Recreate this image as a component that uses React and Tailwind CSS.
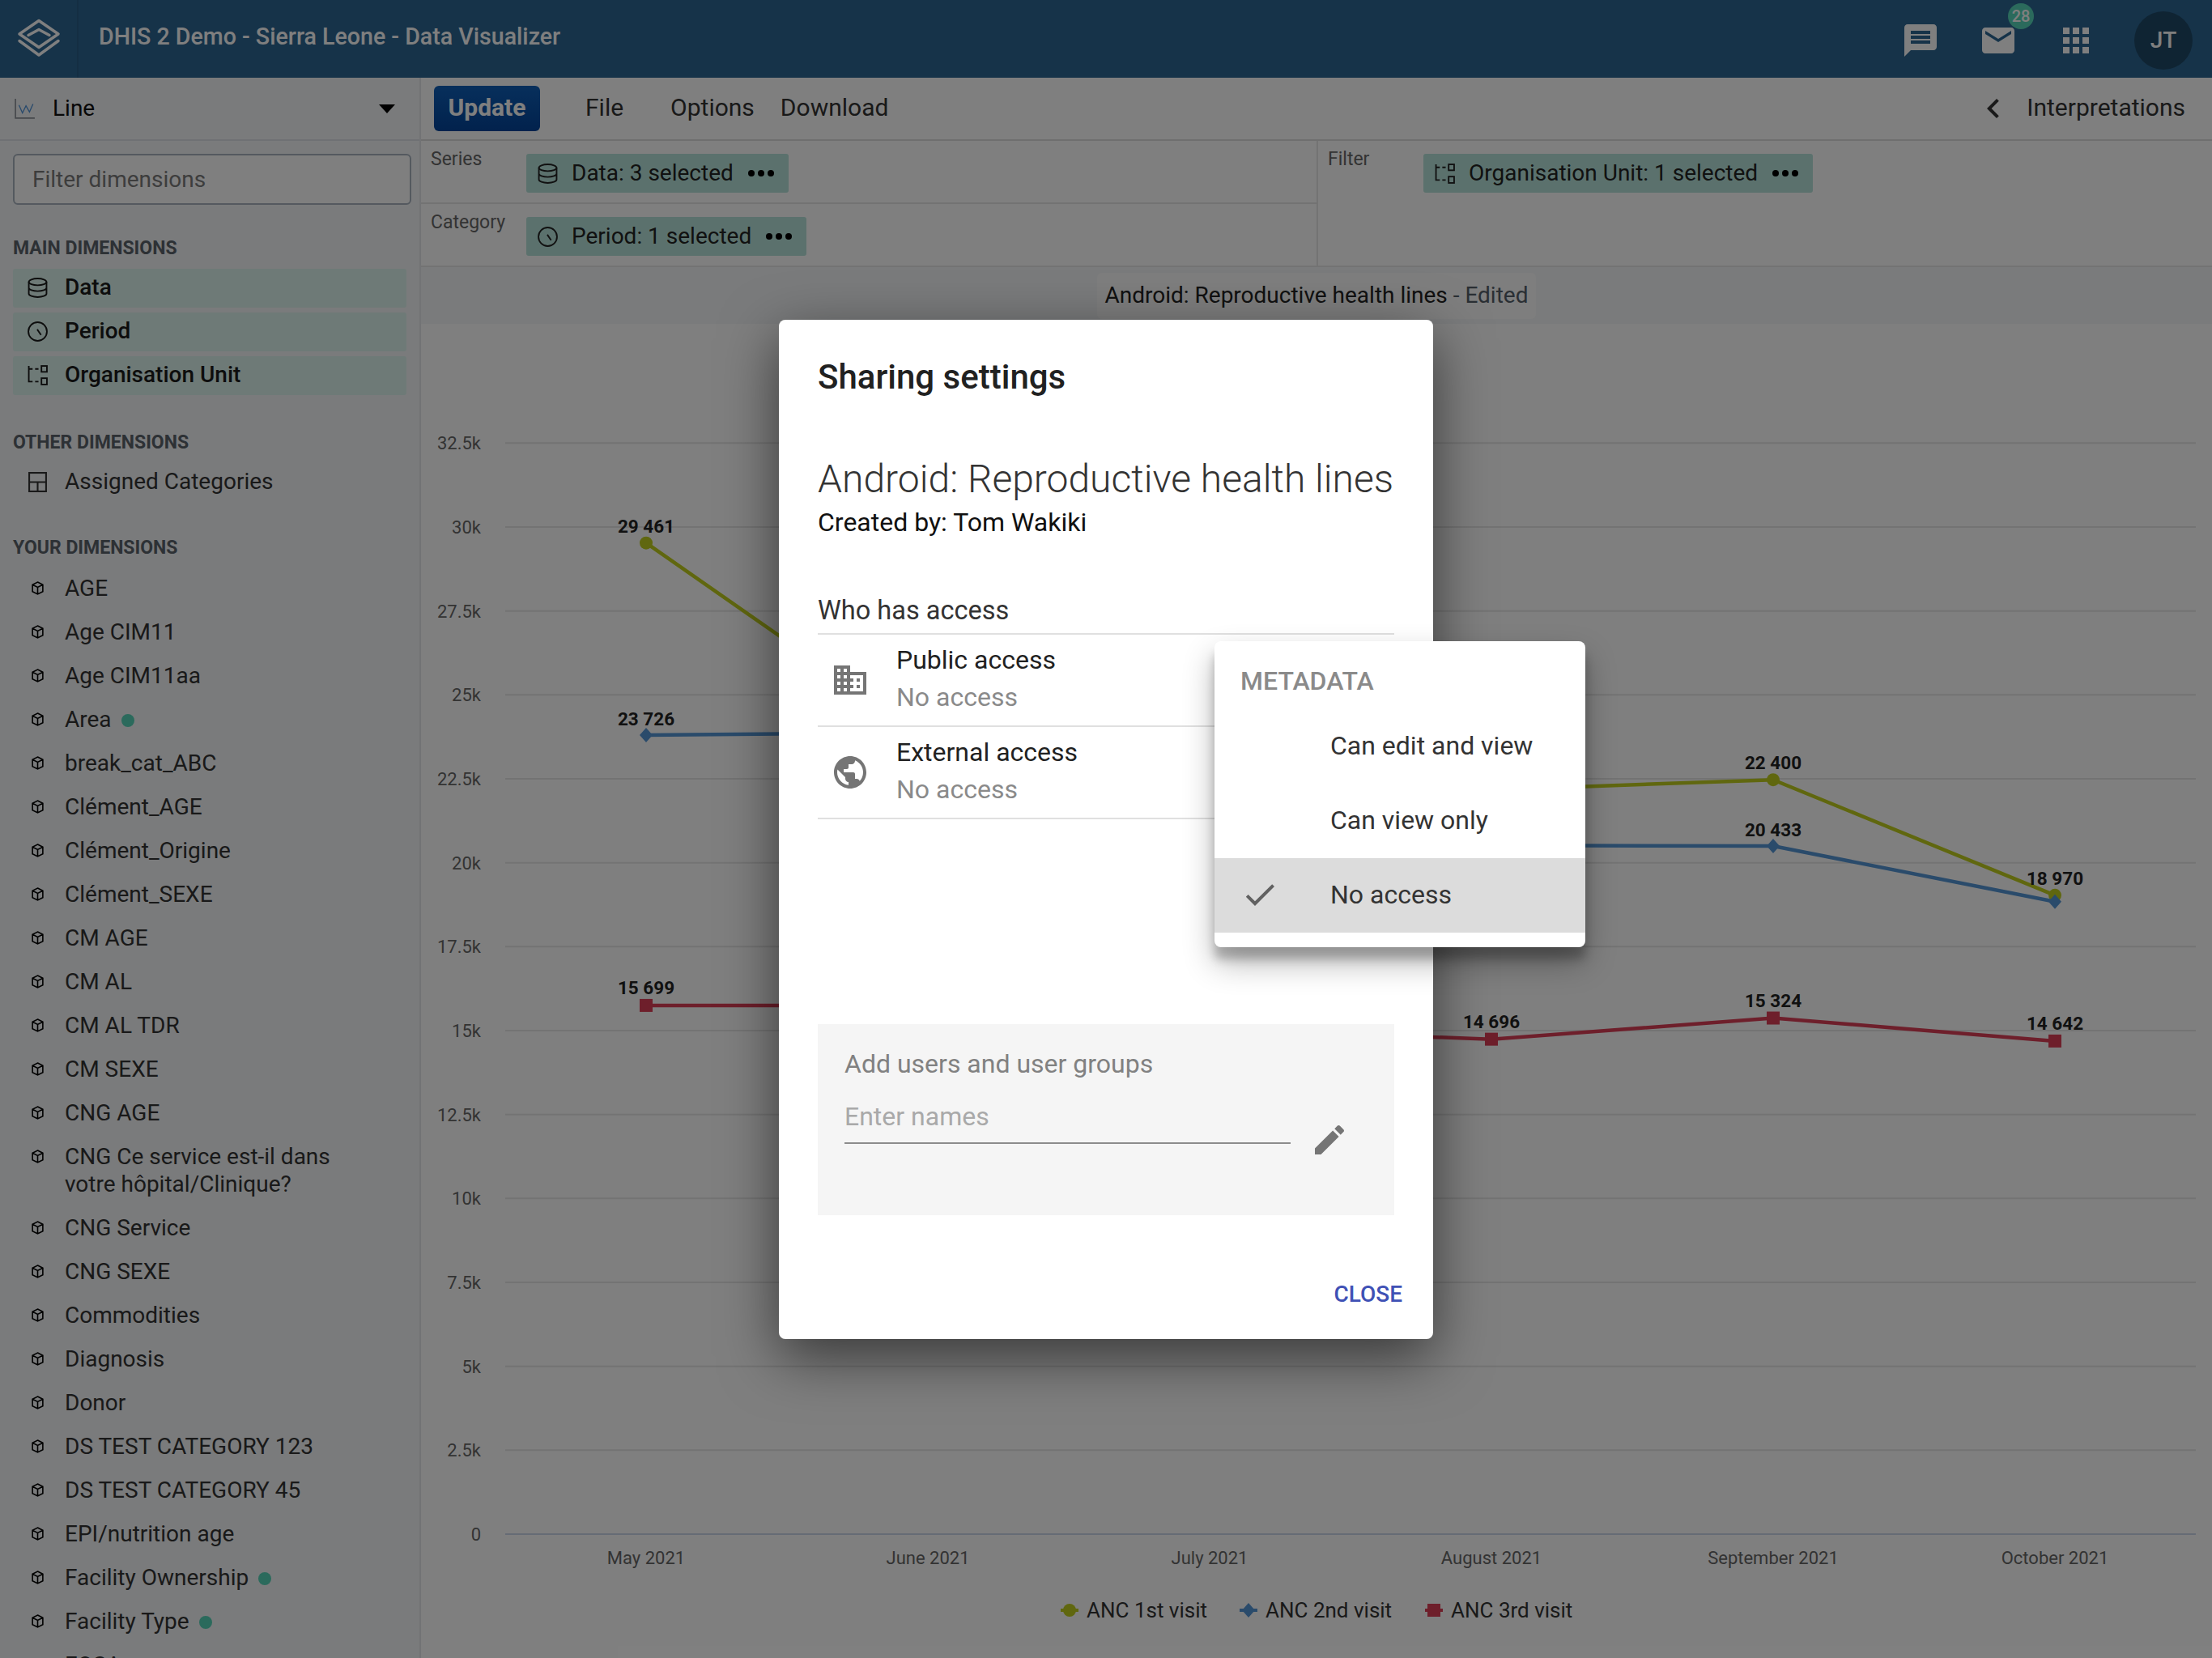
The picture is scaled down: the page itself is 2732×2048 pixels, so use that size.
const dimensions = [
  { name: "AGE" },
  { name: "Age CIM11" },
  { name: "Age CIM11aa" },
  { name: "Area", dot: true },
  { name: "break_cat_ABC" },
  { name: "Clément_AGE" },
  { name: "Clément_Origine" },
  { name: "Clément_SEXE" },
  { name: "CM AGE" },
  { name: "CM AL" },
  { name: "CM AL TDR" },
  { name: "CM SEXE" },
  { name: "CNG AGE" },
  { name: "CNG Ce service est-il dans votre hôpital/Clinique?" },
  { name: "CNG Service" },
  { name: "CNG SEXE" },
  { name: "Commodities" },
  { name: "Diagnosis" },
  { name: "Donor" },
  { name: "DS TEST CATEGORY 123" },
  { name: "DS TEST CATEGORY 45" },
  { name: "EPI/nutrition age" },
  { name: "Facility Ownership", dot: true },
  { name: "Facility Type", dot: true },
  { name: "FOSA" },
];

const ticks = ["0", "2.5k", "5k", "7.5k", "10k", "12.5k", "15k", "17.5k", "20k", "22.5k", "25k", "27.5k", "30k", "32.5k"];
const months = ["May 2021", "June 2021", "July 2021", "August 2021", "September 2021", "October 2021"];
const monthX = [798, 1146, 1494, 1842, 2190, 2538];
const valueY = (v) => 1895 - (v / 2500) * 104;

const series = [
  { color: "#c0cf1e", shape: "circle", labelGap: 13, values: [29430, 23600, 23000, 22100, 22400, 18970], labels: { 0: "29 461", 4: "22 400", 5: "18 970" } },
  { color: "#5596d6", shape: "diamond", labelGap: 12, values: [23726, 23800, 21500, 20450, 20433, 18780], labels: { 0: "23 726", 4: "20 433" } },
  { color: "#dc3f57", shape: "square", labelGap: 14, values: [15699, 15700, 15000, 14696, 15324, 14642], labels: { 0: "15 699", 3: "14 696", 4: "15 324", 5: "14 642" } },
];

function Glyph({ d, className }) {
  return (
    <svg viewBox="0 0 24 24" className={className} fill="currentColor">
      <path d={d} />
    </svg>
  );
}

function DbIcon({ className }) {
  return (
    <svg viewBox="0 0 24 24" className={className} fill="none" stroke="currentColor" strokeWidth="1.8">
      <ellipse cx="12" cy="5" rx="10.5" ry="4" />
      <path d="M1.5 5v14c0 2.2 4.7 4 10.5 4s10.5-1.800 10.500-4V5M1.500 12c0 2.200 4.700 4 10.500 4s10.500-1.800 10.500-4" />
    </svg>
  );
}

function ClockIcon({ className }) {
  return (
    <svg viewBox="0 0 24 24" className={className} fill="none" stroke="currentColor" strokeWidth="1.8">
      <circle cx="12" cy="12" r="11" />
      <path d="M11.500 9.500l4.500 6.500" />
    </svg>
  );
}

function OrgIcon({ className }) {
  return (
    <svg viewBox="0 0 24 24" className={className} fill="none" stroke="currentColor" strokeWidth="1.8">
      <path d="M1.500 1v18.500h4.500M1.500 4.500h4.500M9 4.500h4M9 19.500h4" />
      <rect x="16.500" y="1" width="6.500" height="7" />
      <rect x="16.500" y="15.500" width="6.500" height="7.500" />
    </svg>
  );
}

function CubeIcon({ className }) {
  return (
    <svg viewBox="0 0 16 16" className={className} fill="none" stroke="currentColor" strokeWidth="1.500">
      <path d="M8 1l6 3v8l-6 3-6-3V4zM2 4l6 3 6-3M8 7v8" />
    </svg>
  );
}

function TableIcon({ className }) {
  return (
    <svg viewBox="0 0 24 24" className={className} fill="none" stroke="currentColor" strokeWidth="2">
      <rect x="2" y="1" width="20" height="22" />
      <path d="M2 12h20M12 12v11" />
    </svg>
  );
}

function LineChartIcon() {
  return (
    <svg viewBox="0 0 24 24" className="h-[30px] w-[26px]" fill="none" strokeWidth="1.500">
      <path d="M1 1v22h22" stroke="#8a8f96" />
      <path d="M5 8l4 9 4-8 4 7 4-9" stroke="#4f93d8" strokeWidth="1.200" />
    </svg>
  );
}

function Logo() {
  return (
    <svg viewBox="0 0 54 48" className="mb-[2px] h-[48px] w-[54px]" fill="none" stroke="#ffffff" strokeWidth="3.500" strokeLinejoin="round" strokeLinecap="round">
      <path d="M27 2.500L51 19 27 35.500 3 19z" />
      <path d="M14 20.500L27 13.500 40 20.500" />
      <path d="M3 27.500L27 45 51 27.500" />
    </svg>
  );
}

function Marker({ shape, color, x, y }) {
  if (shape === "circle") return <circle cx={x} cy={y} r="8" fill={color} />;
  if (shape === "diamond") return <path d={`M${x} ${y - 9}l8 9-8 9-8-9z`} fill={color} />;
  return <rect x={x - 8} y={y - 8} width="16" height="16" fill={color} />;
}

function Chart() {
  return (
    <svg viewBox="520 400 2212 1648" className="block h-[1648px] w-[2212px]" fontFamily="Roboto, sans-serif">
      {ticks.map((tick, i) => {
        const y = 1895 - i * 103.67;
        return (
          <g key={tick}>
            <line x1="624" x2="2712" y1={y} y2={y} stroke={i === 0 ? "#ccd6eb" : "#e6e6e6"} strokeWidth="2" />
            <text x="594" y={y + 8} textAnchor="end" fontSize="22" fill="#666666">{tick}</text>
          </g>
        );
      })}
      {months.map((month, i) => (
        <text key={month} x={monthX[i]} y="1932" textAnchor="middle" fontSize="22" fill="#666666">{month}</text>
      ))}
      {series.map((s) => (
        <g key={s.shape}>
          <polyline
            points={s.values.map((v, i) => `${monthX[i]},${valueY(v)}`).join(" ")}
            fill="none"
            stroke={s.color}
            strokeWidth="4.500"
          />
          {s.values.map((v, i) => (
            <Marker key={i} shape={s.shape} color={s.color} x={monthX[i]} y={valueY(v)} />
          ))}
          {Object.entries(s.labels).map(([i, label]) => (
            <text key={i} x={monthX[i]} y={valueY(s.values[i]) - s.labelGap} textAnchor="middle" fontSize="22.500" fontWeight="700" fill="#222222">{label}</text>
          ))}
        </g>
      ))}
      {[
        { x: 1321, label: "ANC 1st visit" },
        { x: 1542, label: "ANC 2nd visit" },
        { x: 1771, label: "ANC 3rd visit" },
      ].map((item, i) => (
        <g key={item.label}>
          <line x1={item.x - 11} x2={item.x + 11} y1="1989" y2="1989" stroke={series[i].color} strokeWidth="4" />
          <Marker shape={series[i].shape} color={series[i].color} x={item.x} y="1989" />
          <text x={item.x + 21} y="1998" fontSize="26" fill="#333333">{item.label}</text>
        </g>
      ))}
    </svg>
  );
}

function Chip({ icon, label }) {
  return (
    <div className="flex h-[48px] w-fit items-center rounded-[3px] bg-[#b6e2da] pl-[14px] pr-[18px] text-[28px] text-[#222222]">
      {icon}
      <span className="ml-[17px]">{label}</span>
      <span className="ml-[18px] flex gap-[4px]">
        <i className="h-[8px] w-[8px] rounded-full bg-black" />
        <i className="h-[8px] w-[8px] rounded-full bg-black" />
        <i className="h-[8px] w-[8px] rounded-full bg-black" />
      </span>
    </div>
  );
}

function AccessRow({ icon, title }) {
  return (
    <div className="flex h-[114px] items-center border-b-2 border-[#e0e0e0] pl-[16px]">
      <Glyph d={icon} className="h-[48px] w-[48px] text-[#757575]" />
      <div className="ml-[33px] pb-[3px]">
        <div className="text-[32px] leading-[46px] text-[#212121]">{title}</div>
        <div className="text-[32px] leading-[46px] text-[#8a8a8a]">No access</div>
      </div>
    </div>
  );
}

export default function App() {
  return (
    <div className="relative h-[2048px] w-[2732px] overflow-hidden bg-white [font-family:Roboto,sans-serif]">
      {/* Header */}
      <header className="flex h-[96px] items-center bg-[#2c6693] text-white">
        <div className="flex h-full w-[97px] items-center justify-center border-r-2 border-[#285d86]">
          <Logo />
        </div>
        <div className="ml-[25px] flex-1 pb-[5px] text-[28.600px] font-medium">DHIS 2 Demo - Sierra Leone - Data Visualizer</div>
        <div className="flex w-[96px] justify-center pt-[4px]">
          <Glyph className="h-[48px] w-[48px]" d="M20 2H4c-1.1 0-1.99.9-1.99 2L2 22l4-4h14c1.1 0 2-.9 2-2V4c0-1.1-.9-2-2-2zm-2 12H6v-2h12v2zm0-3H6V9h12v2zm0-3H6V6h12v2z" />
        </div>
        <div className="relative flex w-[96px] justify-center pt-[4px]">
          <Glyph className="h-[48px] w-[48px]" d="M20 4H4c-1.1 0-1.99.9-1.99 2L2 18c0 1.1.9 2 2 2h16c1.1 0 2-.9 2-2V6c0-1.1-.9-2-2-2zm0 4l-8 5-8-5V6l8 5 8-5v2z" />
          <span className="absolute left-[60px] top-[-18px] flex h-[32px] w-[32px] items-center justify-center rounded-full bg-[#56d4b8] text-[20px] font-medium">28</span>
        </div>
        <div className="flex w-[96px] justify-center pt-[4px]">
          <Glyph className="h-[48px] w-[48px]" d="M4 8h4V4H4v4zm6 12h4v-4h-4v4zm-6 0h4v-4H4v4zm0-6h4v-4H4v4zm6 0h4v-4h-4v4zm6-10v4h4V4h-4zm-6 4h4V4h-4v4zm6 6h4v-4h-4v4zm0 6h4v-4h-4v4z" />
        </div>
        <div className="mx-[24px] mt-[4px] flex h-[72px] w-[72px] items-center justify-center rounded-full bg-[#1f4866] text-[28px] font-medium">JT</div>
      </header>

      <div className="flex">
        {/* Sidebar */}
        <aside className="h-[1952px] w-[520px] overflow-hidden border-r-2 border-[#e4e7eb] bg-[#f4f6f8]">
          <div className="flex h-[78px] items-center border-b-2 border-[#dfe3e8] pl-[18px] pr-[30px]">
            <LineChartIcon />
            <span className="ml-[21px] flex-1 pb-[1px] text-[28px] text-[#111111]">Line</span>
            <span className="h-0 w-0 border-x-[10px] border-t-[11px] border-x-transparent border-t-black" />
          </div>
          <div className="px-[16px] pt-[16px]">
            <div className="flex h-[63px] w-[492px] items-center rounded-[6px] border-2 border-[#a8b3bf] bg-white pl-[22px] text-[28px] text-[#7b7b7b]">
              Filter dimensions
            </div>
            <div className="mt-[39px] text-[23px] font-bold leading-[30px] text-[#5a626b]">MAIN DIMENSIONS</div>
            <div className="mt-[10px] flex w-[486px] flex-col gap-[6px]">
              {[
                { label: "Data", icon: <DbIcon className="h-[25px] w-[25px]" /> },
                { label: "Period", icon: <ClockIcon className="h-[25px] w-[25px]" /> },
                { label: "Organisation Unit", icon: <OrgIcon className="h-[25px] w-[25px]" /> },
              ].map((row) => (
                <div key={row.label} className="flex h-[48px] items-center gap-[21px] rounded-[3px] bg-[#dcf4ee] pb-[2px] pl-[18px] text-[28px] font-medium text-[#1a1a1a]">
                  {row.icon}
                  {row.label}
                </div>
              ))}
            </div>
            <div className="mt-[44px] text-[23px] font-bold leading-[30px] text-[#5a626b]">OTHER DIMENSIONS</div>
            <div className="mt-[6px] flex h-[54px] items-center gap-[21px] pl-[18px] text-[28px] text-[#333333]">
              <TableIcon className="h-[25px] w-[25px]" />
              Assigned Categories
            </div>
            <div className="mt-[40px] text-[23px] font-bold leading-[30px] text-[#5a626b]">YOUR DIMENSIONS</div>
            <div className="mt-[8px]">
              {dimensions.map((dim) => (
                <div key={dim.name} className="flex items-start py-[10px] pl-[22px] text-[28px] leading-[34px] text-[#333333]">
                  <CubeIcon className="mt-[8px] h-[17px] w-[17px] shrink-0 text-black" />
                  <span className="ml-[25px] w-[370px]">
                    {dim.name}
                    {dim.dot && <i className="ml-[12px] inline-block h-[16px] w-[16px] rounded-full bg-[#56d4b8]" />}
                  </span>
                </div>
              ))}
            </div>
          </div>
        </aside>

        {/* Main */}
        <main className="w-[2212px]">
          <div className="flex h-[78px] items-center border-b-2 border-[#dfdfdf] text-[30px] text-[#333333]">
            <button className="ml-[16px] h-[56px] w-[131px] rounded-[6px] bg-gradient-to-b from-[#0f5fb8] to-[#04449a] pb-[3px] text-[30px] font-bold text-white">Update</button>
            <span className="ml-[56px] pb-[3px]">File</span>
            <span className="ml-[58px] pb-[3px]">Options</span>
            <span className="ml-[32px] flex-1 pb-[3px]">Download</span>
            <Glyph className="h-[48px] w-[48px] text-[#333333]" d="M15.41 7.41L14 6l-6 6 6 6 1.41-1.41L10.83 12z" />
            <span className="ml-[17px] mr-[33px] pb-[3px]">Interpretations</span>
          </div>

          <div className="flex h-[156px] border-b-2 border-[#e6e6e6]">
            <div className="w-[1108px] border-r-2 border-[#e6e6e6]">
              <div className="flex h-[78px] border-b-2 border-[#e6e6e6] pl-[12px] pt-[10px]">
                <span className="w-[118px] text-[23px] leading-[26px] text-[#666666]">Series</span>
                <div className="mt-[6px]">
                  <Chip icon={<DbIcon className="h-[25px] w-[25px]" />} label="Data: 3 selected" />
                </div>
              </div>
              <div className="flex pl-[12px] pt-[10px]">
                <span className="w-[118px] text-[23px] leading-[26px] text-[#666666]">Category</span>
                <div className="mt-[6px]">
                  <Chip icon={<ClockIcon className="h-[25px] w-[25px]" />} label="Period: 1 selected" />
                </div>
              </div>
            </div>
            <div className="flex pl-[12px] pt-[10px]">
              <span className="w-[118px] text-[23px] leading-[26px] text-[#666666]">Filter</span>
              <div className="mt-[6px]">
                <Chip icon={<OrgIcon className="h-[25px] w-[25px]" />} label="Organisation Unit: 1 selected" />
              </div>
            </div>
          </div>

          <div className="flex h-[70px] items-center justify-center bg-[#f4f6f8]">
            <div className="flex h-[57px] items-center rounded-[6px] bg-[#fcfcfc] px-[10px] text-[28px] text-[#222222]">
              Android: Reproductive health lines<span className="text-[#555e68]">&nbsp;- Edited</span>
            </div>
          </div>

          <Chart />
        </main>
      </div>

      {/* Modal overlay */}
      <div className="absolute inset-0 flex items-center justify-center bg-black/50">
        <div className="flex h-[1259px] w-[808px] flex-col rounded-[8px] bg-white px-[48px] pt-[47px] shadow-[0_22px_70px_rgba(0,0,0,0.56)]">
          <h2 className="text-[42px] font-medium leading-[48px] text-[#212121]">Sharing settings</h2>
          <div className="mt-[74px] whitespace-nowrap text-[48px] font-light leading-[56px] text-[#333333]">Android: Reproductive health lines</div>
          <div className="mt-[5px] text-[32px] leading-[40px] text-[#111111]">Created by: Tom Wakiki</div>
          <div className="mt-[69px] border-b-2 border-[#e0e0e0] pb-[8px] text-[32.500px] leading-[40px] text-[#333333]">Who has access</div>
          <AccessRow title="Public access" icon="M12 7V3H2v18h20V7H12zM6 19H4v-2h2v2zm0-4H4v-2h2v2zm0-4H4V9h2v2zm0-4H4V5h2v2zm4 12H8v-2h2v2zm0-4H8v-2h2v2zm0-4H8V9h2v2zm0-4H8V5h2v2zm10 12h-8v-2h2v-2h-2v-2h2v-2h-2V9h8v10zm-2-8h-2v2h2v-2zm0 4h-2v2h2v-2z" />
          <AccessRow title="External access" icon="M12 2C6.48 2 2 6.48 2 12s4.48 10 10 10 10-4.48 10-10S17.52 2 12 2zm-1 17.93c-3.95-.49-7-3.85-7-7.93 0-.62.08-1.21.21-1.79L9 15v1c0 1.1.9 2 2 2v1.93zm6.9-2.54c-.26-.81-1-1.39-1.9-1.39h-1v-3c0-.55-.45-1-1-1H8v-2h2c.55 0 1-.45 1-1V7h2c1.1 0 2-.9 2-2v-.41c2.93 1.19 5 4.06 5 7.41 0 2.08-.8 3.97-2.1 5.39z" />
          <div className="mt-[253px] h-[236px] bg-[#f5f5f5] pl-[33px] pr-[48px] pt-[31px]">
            <div className="text-[32px] leading-[36px] text-[#818181]">Add users and user groups</div>
            <div className="mt-[12px] flex items-end">
              <div className="w-[551px] border-b-2 border-[#8c8c8c] pb-[14px] pt-[17px] text-[32px] leading-[36px] text-[#a9a9a9]">Enter names</div>
              <Glyph className="mb-[-19px] ml-[24px] h-[48px] w-[48px] text-[#757575]" d="M3 17.25V21h3.75L17.81 9.94l-3.75-3.75L3 17.25zM20.71 7.04c.39-.39.39-1.02 0-1.41l-2.34-2.34c-.39-.39-1.02-.39-1.41 0l-1.83 1.83 3.75 3.75 1.83-1.83z" />
            </div>
          </div>
          <div className="mr-[-10px] mt-[80px] text-right text-[28px] font-medium leading-[36px] text-[#3f51b5]">CLOSE</div>
        </div>

        {/* Permission menu */}
        <div className="absolute left-[1500px] top-[792px] h-[378px] w-[458px] rounded-[8px] bg-white pt-[33px] shadow-[0_19px_38px_rgba(0,0,0,0.30),0_15px_12px_rgba(0,0,0,0.22)]">
          <div className="pl-[32px] text-[32px] font-medium leading-[32px] text-[#8a8a8a]">METADATA</div>
          <div className="mt-[19px]">
            {["Can edit and view", "Can view only", "No access"].map((option) => (
              <div key={option} className={option === "No access" ? "flex h-[92px] items-center bg-[#dcdcdc] pb-[2px] pl-[32px] text-[32px] text-[#333333]" : "flex h-[92px] items-center pb-[2px] pl-[32px] text-[32px] text-[#333333]"}>
                <div className="h-[48px] w-[48px]">
                  {option === "No access" && <Glyph className="h-[48px] w-[48px] text-[#616161]" d="M9 16.17L4.83 12l-1.42 1.41L9 19 21 7l-1.41-1.41z" />}
                </div>
                <span className="ml-[63px]">{option}</span>
              </div>
            ))}
          </div>
        </div>
      </div>
    </div>
  );
}
